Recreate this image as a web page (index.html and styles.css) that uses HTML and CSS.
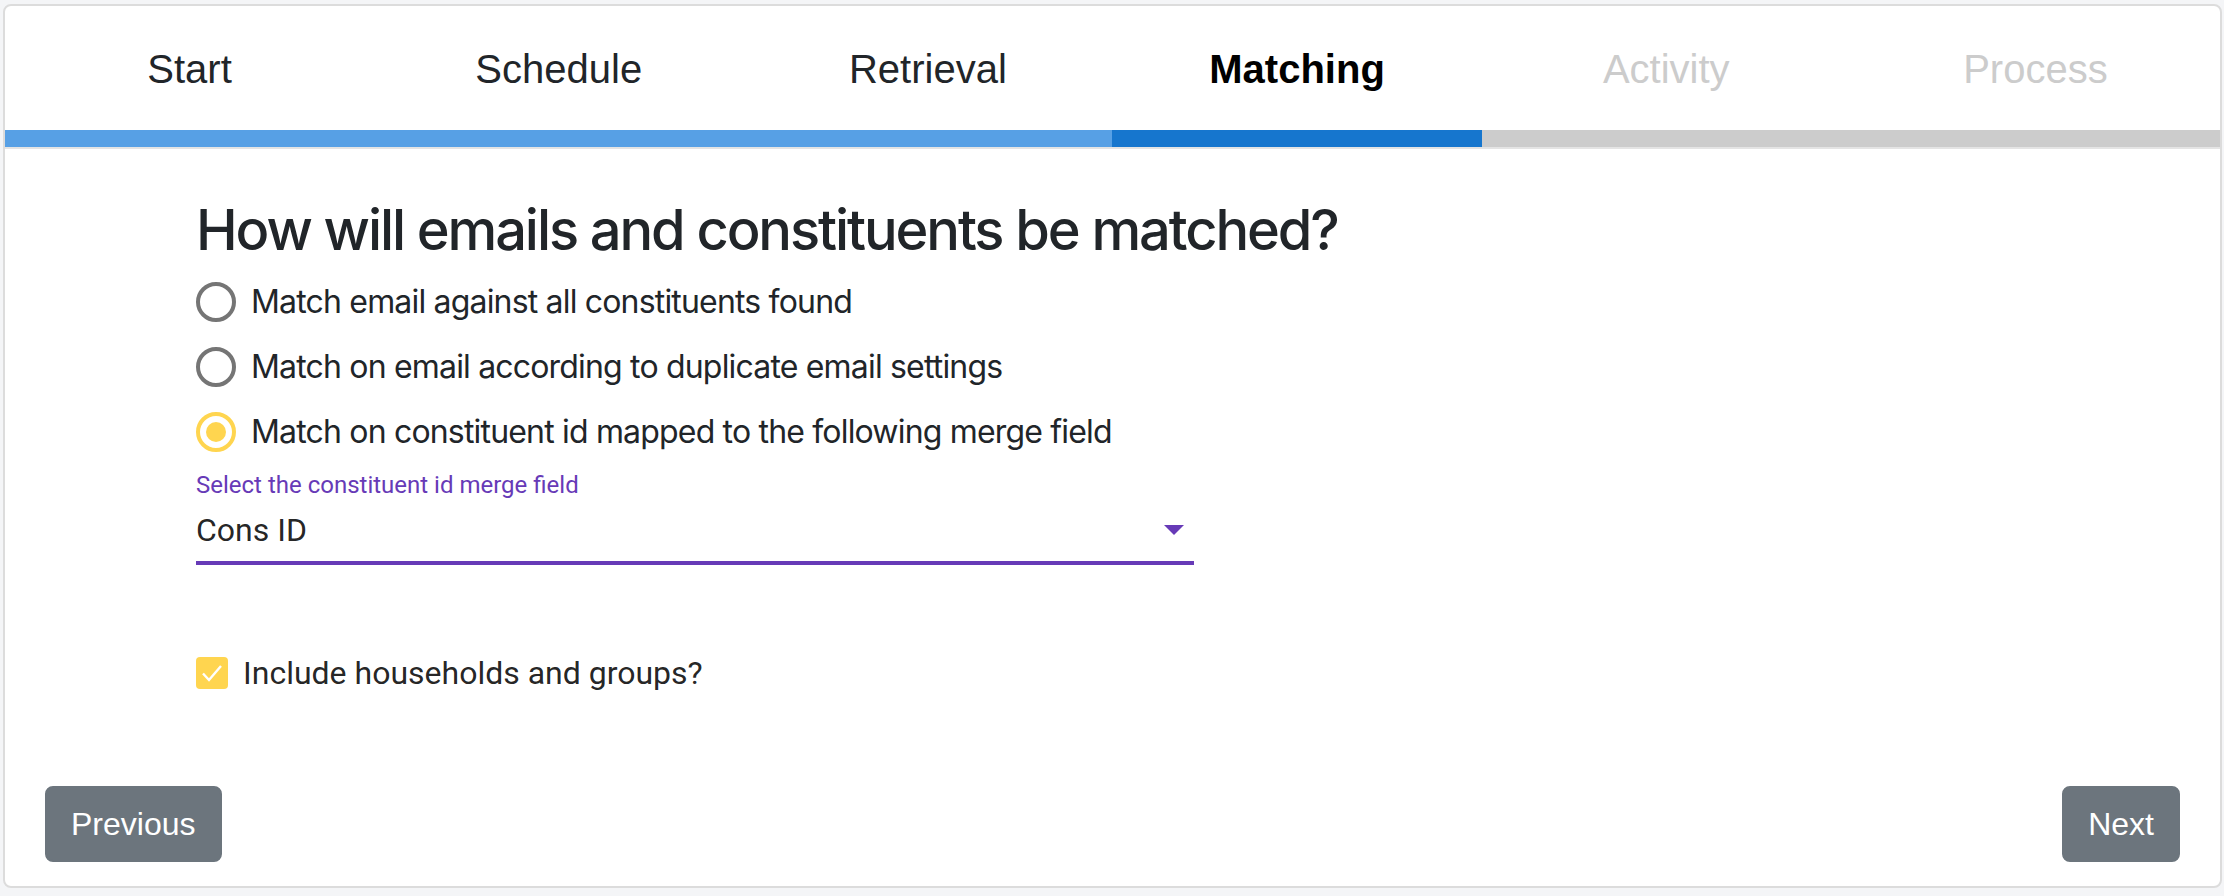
FILE: index.html
```html
<!DOCTYPE html>
<html lang="en">
<head>
<meta charset="utf-8">
<title>Matching</title>
<link rel="stylesheet" href="styles.css">
</head>
<body>
<div class="page">
  <div class="card">
    <nav class="steps">
      <div class="step done"><span class="step-label">Start</span><span class="step-bar"></span></div>
      <div class="step done"><span class="step-label">Schedule</span><span class="step-bar"></span></div>
      <div class="step done"><span class="step-label">Retrieval</span><span class="step-bar"></span></div>
      <div class="step current"><span class="step-label">Matching</span><span class="step-bar"></span></div>
      <div class="step todo"><span class="step-label">Activity</span><span class="step-bar"></span></div>
      <div class="step todo"><span class="step-label">Process</span><span class="step-bar"></span></div>
    </nav>

    <main class="content">
      <h3 class="title">How will emails and constituents be matched?</h3>
      <div class="radio-group">
        <label class="radio-row"><span class="radio"></span><span class="radio-text">Match email against all constituents found</span></label>
        <label class="radio-row"><span class="radio"></span><span class="radio-text">Match on email according to duplicate email settings</span></label>
        <label class="radio-row"><span class="radio checked"><span class="radio-dot"></span></span><span class="radio-text">Match on constituent id mapped to the following merge field</span></label>
      </div>

      <div class="field">
        <div class="field-label">Select the constituent id merge field</div>
        <div class="field-control">
          <span class="field-value">Cons ID</span>
          <svg class="field-arrow" width="20" height="10" viewBox="0 0 20 10"><polygon points="0,0 20,0 10,10" fill="#673ab7"/></svg>
        </div>
      </div>

      <label class="check-row">
        <span class="checkbox">
          <svg width="32" height="32" viewBox="0 0 32 32"><polyline points="7,16.5 13,23 25,9" fill="none" stroke="#ffffff" stroke-width="2.4"/></svg>
        </span>
        <span class="check-text">Include households and groups?</span>
      </label>
    </main>

    <footer class="actions">
      <button class="btn">Previous</button>
      <button class="btn">Next</button>
    </footer>
  </div>
</div>
</body>
</html>
```

FILE: styles.css
```css
html, body {
  margin: 0;
  padding: 0;
  background: #f4f5f7;
}

.page {
  padding: 4px 2px 8px 3px;
  height: 896px;
  box-sizing: border-box;
}

.card {
  height: 884px;
  box-sizing: border-box;
  background: #ffffff;
  border: 2px solid #dcdcdc;
  border-radius: 8px;
  display: flex;
  flex-direction: column;
  overflow: hidden;
}

.steps {
  display: grid;
  grid-template-columns: repeat(6, 1fr);
  border-bottom: 2px solid #e4e4e4;
}

.step {
  display: flex;
  flex-direction: column;
}

.step-label {
  height: 124px;
  padding-top: 3px;
  box-sizing: border-box;
  display: flex;
  align-items: center;
  justify-content: center;
  font-family: "Liberation Sans", Arial, sans-serif;
  font-size: 40px;
  color: #212529;
}

.step-bar {
  height: 17px;
}

.done .step-bar { background: #57a0e5; }
.current .step-bar { background: #1676ce; }
.todo .step-bar { background: #cccccc; }

.current .step-label {
  font-weight: 700;
  color: #000000;
}

.todo .step-label {
  color: #cccccc;
}

.content {
  padding: 0 0 0 191px;
}

.title {
  margin: 48px 0 0;
  font-family: Inter, "Noto Sans", sans-serif;
  font-weight: 500;
  font-size: 56px;
  line-height: 67px;
  color: #212529;
  letter-spacing: -2.1px;
}

.radio-group {
  margin-top: 5px;
  display: flex;
  flex-direction: column;
}

.radio-row {
  height: 65px;
  display: flex;
  align-items: center;
  gap: 15px;
}

.radio {
  width: 40px;
  height: 40px;
  box-sizing: border-box;
  border: 4px solid #757575;
  border-radius: 50%;
  display: flex;
  align-items: center;
  justify-content: center;
  flex: none;
}

.radio.checked {
  border-color: #ffd54f;
}

.radio-dot {
  width: 20px;
  height: 20px;
  border-radius: 50%;
  background: #ffd54f;
}

.radio-text {
  font-family: Inter, "Noto Sans", sans-serif;
  font-size: 32px;
  color: #212529;
  letter-spacing: -0.82px;
}

.field {
  margin-top: 7px;
  width: 998px;
}

.field-label {
  font-family: Roboto, sans-serif;
  font-size: 24px;
  line-height: 28px;
  color: #673ab7;
}

.field-control {
  height: 62px;
  display: flex;
  align-items: center;
  justify-content: space-between;
  border-bottom: 4px solid #673ab7;
  padding-right: 10px;
}

.field-value {
  font-family: Roboto, sans-serif;
  font-size: 32px;
  color: rgba(0, 0, 0, 0.87);
}

.field-arrow {
  display: block;
}

.check-row {
  margin-top: 88px;
  height: 40px;
  display: flex;
  align-items: center;
  gap: 15px;
}

.checkbox {
  width: 32px;
  height: 32px;
  border-radius: 4px;
  background: #ffd54f;
  display: flex;
  flex: none;
}

.check-text {
  font-family: Roboto, sans-serif;
  font-size: 32px;
  color: rgba(0, 0, 0, 0.87);
}

.actions {
  margin-top: auto;
  display: flex;
  justify-content: space-between;
  padding: 0 40px 24px 40px;
}

.btn {
  font-family: "Liberation Sans", Arial, sans-serif;
  font-size: 32px;
  line-height: 48px;
  padding: 12px 24px;
  border: 2px solid #6c757d;
  border-radius: 8px;
  background: #6c757d;
  color: #ffffff;
}
```
